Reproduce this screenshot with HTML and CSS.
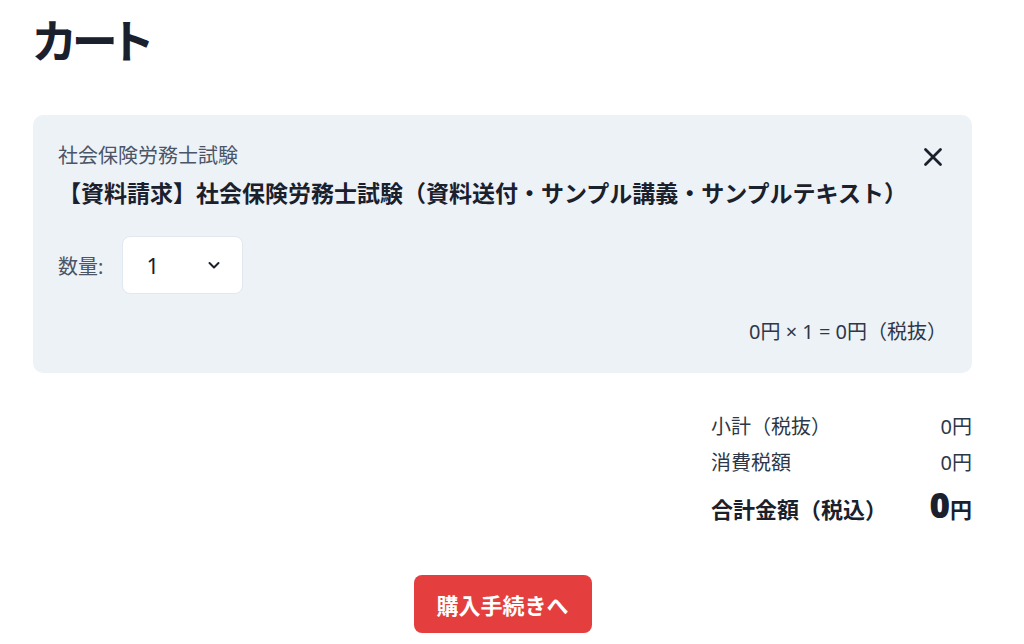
FILE: index.html
```html
<!DOCTYPE html>
<html lang="ja">
<head>
  <meta charset="UTF-8">
  <title>カート</title>
  <link rel="stylesheet" href="styles.css">
</head>
<body>
<div class="cart">
  <h1 class="cart-title">カート</h1>

  <div class="cart-item">
    <div class="item-head">
      <div>
        <div class="item-category">社会保険労務士試験</div>
        <div class="item-name">【資料請求】社会保険労務士試験（資料送付・サンプル講義・サンプルテキスト）</div>
      </div>
      <button class="item-remove" aria-label="削除">
        <svg width="20" height="20" viewBox="0 0 20 20"><path d="M2.5 2.5L17.5 17.5M17.5 2.5L2.5 17.5" stroke="#1a202c" stroke-width="2.8" stroke-linecap="round"/></svg>
      </button>
    </div>

    <div class="qty">
      <span class="qty-label">数量:</span>
      <div class="qty-select">
        <span>1</span>
        <svg width="14" height="14" viewBox="0 0 14 14"><path d="M2.5 5L7 9.5L11.5 5" fill="none" stroke="#1a202c" stroke-width="2" stroke-linecap="round" stroke-linejoin="round"/></svg>
      </div>
    </div>

    <div class="item-price">0円 × 1 = 0円（税抜）</div>
  </div>

  <div class="totals">
    <div class="total-row"><span>小計（税抜）</span><span>0円</span></div>
    <div class="total-row"><span>消費税額</span><span>0円</span></div>
    <div class="total-row grand"><span>合計金額（税込）</span><span><b class="big">0</b>円</span></div>
  </div>

  <div class="actions">
    <button class="btn-checkout">購入手続きへ</button>
  </div>
</div>
</body>
</html>
```

FILE: styles.css
```css
body {
  margin: 0;
  font-family: "Noto Sans", "Noto Sans CJK JP", sans-serif;
  color: #1a202c;
  background: #fff;
}

.cart {
  width: 939px;
  margin-left: 33px;
}

.cart-title {
  font-size: 46px;
  font-weight: 700;
  font-feature-settings: "palt";
  letter-spacing: -3px;
  margin: 0;
  padding-top: 8px;
  line-height: 64px;
}

.cart-item {
  margin-top: 43px;
  background: #edf2f7;
  border-radius: 10px;
  padding: 27px 25px 28px;
}

.item-head {
  display: flex;
  justify-content: space-between;
  align-items: flex-start;
}

.item-category {
  font-size: 20px;
  color: #4a5568;
  line-height: 28px;
}

.item-name {
  font-size: 23px;
  font-weight: 700;
  line-height: 34px;
  margin-top: 6px;
}

.item-remove {
  background: none;
  border: none;
  padding: 0;
  margin: 5px 4px 0 0;
  cursor: pointer;
}

.qty {
  display: flex;
  align-items: center;
  margin-top: 26px;
}

.qty-label {
  font-size: 20px;
  color: #4a5568;
  margin-right: 19px;
}

.qty-select {
  width: 121px;
  height: 58px;
  box-sizing: border-box;
  background: #fff;
  border: 1px solid #e2e8f0;
  border-radius: 8px;
  display: flex;
  align-items: center;
  justify-content: space-between;
  padding: 0 21px 0 23px;
  font-size: 22px;
}

.item-price {
  text-align: right;
  font-size: 20px;
  color: #2d3748;
  margin-top: 22px;
}

.totals {
  width: 261px;
  margin: 36px 0 0 auto;
}

.total-row {
  display: flex;
  justify-content: space-between;
  align-items: baseline;
  font-size: 20px;
  color: #2d3748;
  line-height: 36px;
}

.total-row.grand {
  font-weight: 700;
  font-size: 22px;
  color: #1a202c;
  margin-top: 6px;
}

.big {
  font-size: 35px;
}

.actions {
  display: flex;
  justify-content: center;
  margin-top: 48px;
}

.btn-checkout {
  background: #e53e3e;
  color: #fff;
  border: none;
  border-radius: 8px;
  width: 178px;
  height: 58px;
  font-family: inherit;
  font-size: 22px;
  font-weight: 700;
  cursor: pointer;
}
```
